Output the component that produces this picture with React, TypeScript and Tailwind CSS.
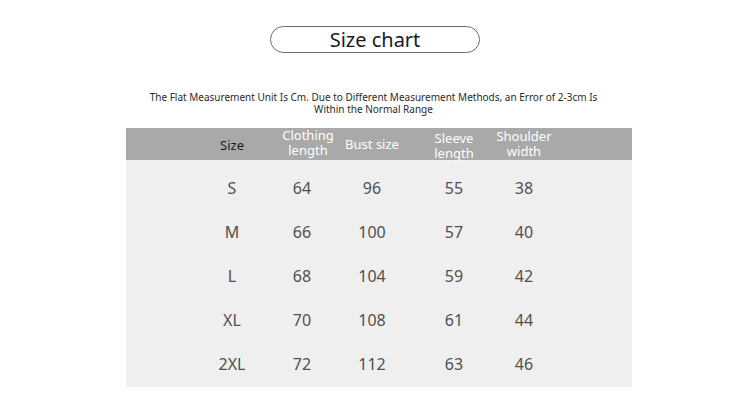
import React from 'react';

const rows = [
  { size: 'S', len: 64, bust: 96, sleeve: 55, shoulder: 38 },
  { size: 'M', len: 66, bust: 100, sleeve: 57, shoulder: 40 },
  { size: 'L', len: 68, bust: 104, sleeve: 59, shoulder: 42 },
  { size: 'XL', len: 70, bust: 108, sleeve: 61, shoulder: 44 },
  { size: '2XL', len: 72, bust: 112, sleeve: 63, shoulder: 46 },
];

export default function App() {
  return (
    <div className="w-[747px] h-[416px] bg-white overflow-hidden" style={{ fontFamily: '"Noto Sans", "Open Sans", sans-serif' }}>
      {/* title pill */}
      <div className="flex justify-center pt-[26px]">
        <div className="w-[210px] h-[27px] ml-[3px] rounded-full border-[1.5px] border-[#6b6b6b] flex items-center justify-center text-[20px] leading-none text-[#1a1a1a]">
          Size chart
        </div>
      </div>

      {/* note */}
      <p className="mt-[38px] text-center text-[10px] leading-[12px] text-[#2a2a2a]">
        The Flat Measurement Unit Is Cm. Due to Different Measurement Methods, an Error of 2-3cm Is
        <br />
        Within the Normal Range
      </p>

      {/* table */}
      <div className="ml-[126px] mt-[13px] w-[506px]">
        <div className="h-[32px] bg-[#a9a9a9] flex pl-[76px] text-[13px] leading-[15px] text-white">
          <div className="w-[60px] flex items-center justify-center text-[#1c1c1c] pt-[2px]">Size</div>
          <div className="w-[60px] ml-[16px] flex items-center justify-center text-center -mt-[3px]">Clothing<br />length</div>
          <div className="w-[60px] ml-[4px] flex items-center justify-center whitespace-nowrap">Bust size</div>
          <div className="w-[60px] ml-[22px] flex items-center justify-center text-center pt-[3px]">Sleeve<br />length</div>
          <div className="w-[60px] ml-[10px] flex items-center justify-center text-center">Shoulder<br />width</div>
        </div>
        <div className="bg-[#efefef] pt-[6px] pb-[1px]">
          {rows.map((r) => (
            <div key={r.size} className="h-[44px] flex items-center pl-[76px] text-[16px] text-[#4f4f4f]">
              <div className="w-[60px] flex justify-center">{r.size}</div>
              <div className="w-[60px] ml-[10px] flex justify-center">{r.len}</div>
              <div className="w-[60px] ml-[10px] flex justify-center">{r.bust}</div>
              <div className="w-[60px] ml-[22px] flex justify-center">{r.sleeve}</div>
              <div className="w-[60px] ml-[10px] flex justify-center">{r.shoulder}</div>
            </div>
          ))}
        </div>
      </div>
    </div>
  );
}
